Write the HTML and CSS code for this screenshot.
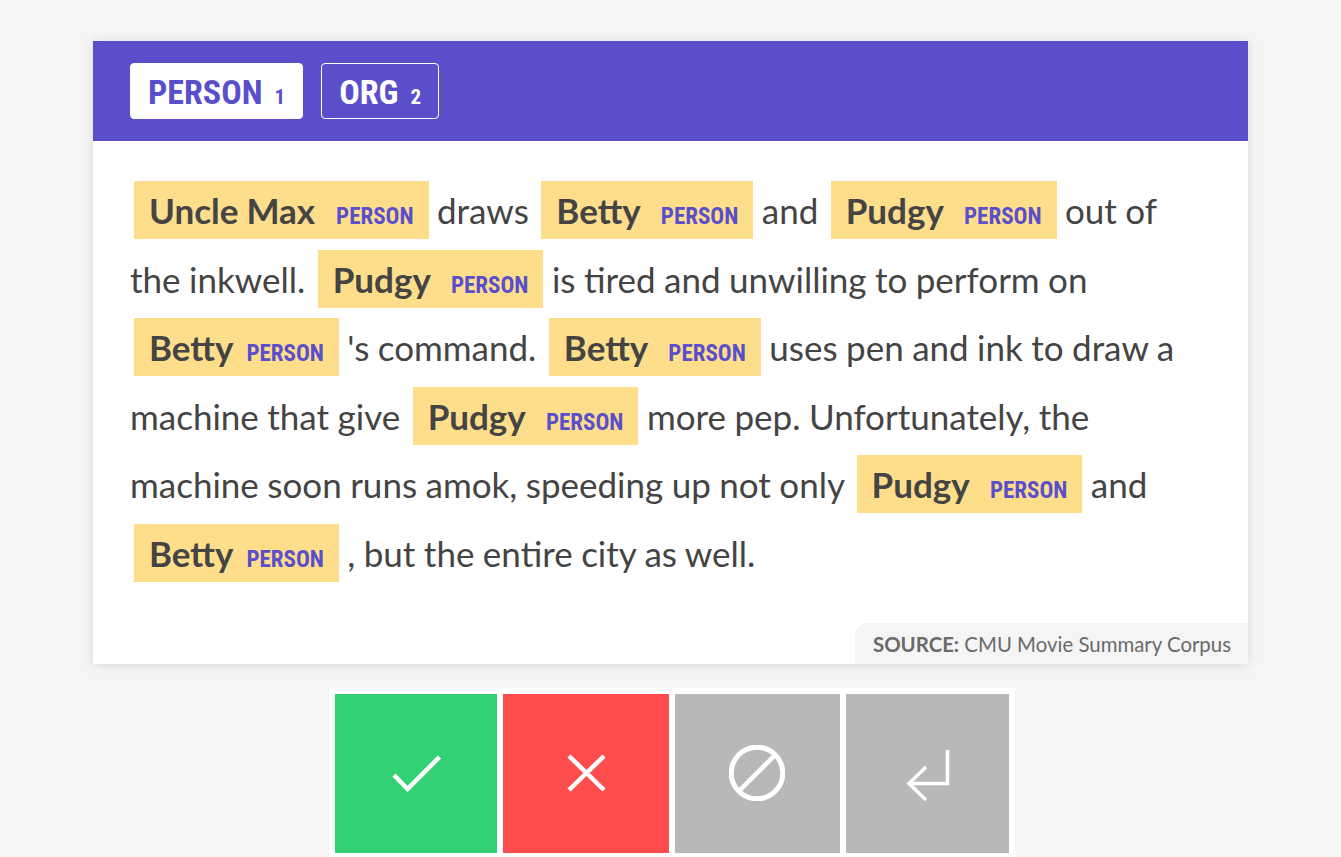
FILE: index.html
```html
<!DOCTYPE html>
<html lang="en">
<head>
<meta charset="utf-8">
<title>NER annotation</title>
<link rel="stylesheet" href="styles.css">
</head>
<body>
<main class="page">
  <section class="card">
    <header class="card-header">
      <button class="tab tab-active">PERSON<span class="tab-key">1</span></button>
      <button class="tab">ORG<span class="tab-key">2</span></button>
    </header>
    <div class="card-body">
      <p class="text"><mark class="ent">Uncle Max <span class="ent-label">PERSON</span></mark> draws <mark class="ent">Betty <span class="ent-label">PERSON</span></mark> and <mark class="ent">Pudgy <span class="ent-label">PERSON</span></mark> out of the inkwell. <mark class="ent">Pudgy <span class="ent-label">PERSON</span></mark> is tired and unwilling to perform on <mark class="ent">Betty<span class="ent-label">PERSON</span></mark> 's command. <mark class="ent">Betty <span class="ent-label">PERSON</span></mark> uses pen and ink to draw a machine that give <mark class="ent">Pudgy <span class="ent-label">PERSON</span></mark> more pep. Unfortunately, the machine soon runs amok, speeding up not only <mark class="ent">Pudgy <span class="ent-label">PERSON</span></mark> and <mark class="ent">Betty<span class="ent-label">PERSON</span></mark> , but the entire city as well.</p>
    </div>
    <footer class="card-meta">
      <div class="meta-badge"><b>SOURCE:</b> CMU Movie Summary Corpus</div>
    </footer>
  </section>

  <nav class="actions">
    <button class="action action-accept" aria-label="accept">
      <svg width="56" height="56" viewBox="0 0 56 56"><polyline points="6,30 19.5,44 51.5,12" fill="none" stroke="#fff" stroke-width="4.5" stroke-linecap="butt" stroke-linejoin="miter"/></svg>
    </button>
    <button class="action action-reject" aria-label="reject">
      <svg width="56" height="56" viewBox="0 0 56 56"><path d="M11 11 L46 45 M46 11 L11 45" fill="none" stroke="#fff" stroke-width="4.5"/></svg>
    </button>
    <button class="action action-ignore" aria-label="ignore">
      <svg width="56" height="56" viewBox="0 0 56 56"><circle cx="28" cy="28" r="25.8" fill="none" stroke="#fff" stroke-width="5"/><path d="M45.5 10.5 L10.5 45.5" stroke="#fff" stroke-width="4.5"/></svg>
    </button>
    <button class="action action-undo" aria-label="undo">
      <svg width="56" height="56" viewBox="0 0 56 56"><path d="M48.5 5 V38.5 H11" fill="none" stroke="#fff" stroke-width="3.5"/><path d="M27 22 L10 38.5 L27 55" fill="none" stroke="#fff" stroke-width="3.5"/></svg>
    </button>
  </nav>
</main>
</body>
</html>
```
FILE: styles.css
```css
html, body {
  margin: 0;
  padding: 0;
}

body {
  background: #f5f5f5;
  font-family: "Lato", "Open Sans", sans-serif;
  color: #444;
}

.page {
  padding-top: 41px;
}

.card {
  width: 1155px;
  margin: 0 auto;
  background: #fff;
  box-shadow: 0 1px 10px rgba(0, 0, 0, 0.12);
}

.card-header {
  height: 100px;
  background: #5a4fcb;
  display: flex;
  align-items: center;
  gap: 18px;
  padding-left: 37px;
}

.tab {
  height: 56px;
  box-sizing: border-box;
  padding: 0 17px 0 17px;
  border: 1px solid #fff;
  border-radius: 4px;
  background: transparent;
  color: #fff;
  font-family: "Roboto Condensed", "Roboto", sans-serif;
  font-weight: 700;
  font-size: 34px;
  display: flex;
  align-items: baseline;
  line-height: 56px;
}

.tab-active {
  background: #fff;
  color: #5a4fcb;
}

.tab-key {
  font-size: 21px;
  margin-left: 12px;
}

.card-body {
  padding: 35px 37px 35px 37px;
}

.text {
  margin: 0;
  font-size: 35px;
  line-height: 68.6px;
  word-spacing: -0.5px;
  color: #444;
}

.ent {
  background: #fede8b;
  color: #444;
  font-weight: 700;
  padding: 8px 15px;
  margin-left: 4px;
}

.ent-label {
  font-family: "Roboto Condensed", "Roboto", sans-serif;
  font-weight: 700;
  font-size: 23px;
  line-height: 1;
  color: #5a4fcb;
  margin-left: 13px;
  word-spacing: 0;
}

.card-meta {
  display: flex;
  justify-content: flex-end;
}

.meta-badge {
  background: #f5f5f5;
  border-top-left-radius: 13px;
  height: 41px;
  line-height: 42px;
  padding: 0 17px 0 18px;
  font-size: 20.4px;
  color: #6a6a6a;
}

.meta-badge b {
  font-weight: 700;
}

.actions {
  width: 674px;
  margin: 24px auto 0;
  background: #fff;
  padding: 6px;
  display: flex;
  gap: 6px;
  position: relative;
  left: 1px;
}

.action {
  border: 0;
  padding: 0;
  height: 159px;
  display: flex;
  align-items: center;
  justify-content: center;
  cursor: pointer;
}

.action svg {
  display: block;
}

.action-accept { width: 162px; background: #32d274; }
.action-reject { width: 166px; background: #ff4d4d; }
.action-ignore { width: 165px; background: #b8b8b8; }
.action-undo   { width: 163px; background: #b8b8b8; }
```
